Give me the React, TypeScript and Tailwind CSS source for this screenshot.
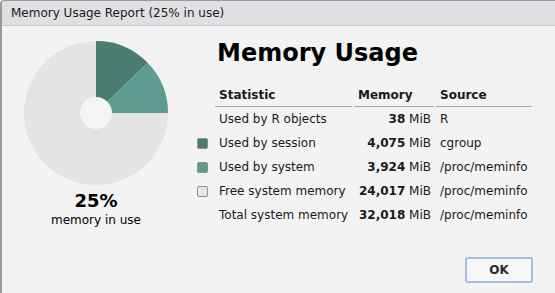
import React from "react";

const rows = [
  { swatch: null, label: "Used by R objects", mem: "38", src: "R" },
  { swatch: "bg-[#4c7b71]", label: "Used by session", mem: "4,075", src: "cgroup" },
  { swatch: "bg-[#5f9c90]", label: "Used by system", mem: "3,924", src: "/proc/meminfo" },
  { swatch: "bg-[#e6e6e6]", label: "Free system memory", mem: "24,017", src: "/proc/meminfo" },
  { swatch: null, label: "Total system memory", mem: "32,018", src: "/proc/meminfo" },
];

function Pie() {
  // angles clockwise from 12 o'clock
  const a = (4075 / 32018) * 360;
  const rad = (a * Math.PI) / 180;
  const x = 72 + 72 * Math.sin(rad);
  const y = 72 - 72 * Math.cos(rad);
  return (
    <svg width="144" height="144" viewBox="0 0 144 144">
      <path d="M72 72 L144 72 A72 72 0 1 1 72 0 Z" fill="#e4e4e4" />
      <path d={`M72 72 L72 0 A72 72 0 0 1 ${x} ${y} Z`} fill="#4c7b71" />
      <path d={`M72 72 L${x} ${y} A72 72 0 0 1 144 72 Z`} fill="#5f9c90" />
      <circle cx="72" cy="72" r="16" fill="#f4f5f4" />
    </svg>
  );
}

export default function App() {
  return (
    <div className="w-[555px] h-[293px] overflow-hidden bg-[#f2f3f2] border-l-2 border-t border-[#9a9a9a] rounded-tl-[4px] flex flex-col text-[#1a1a1a] font-['DejaVu_Sans',sans-serif]">
      {/* title bar */}
      <div className="h-[25px] shrink-0 bg-[#dfe0e3] border-b border-[#c9cacd] flex items-center pl-[9px] text-[12px]">
        Memory Usage Report (25% in use)
      </div>

      <div className="flex flex-1">
        {/* chart */}
        <div className="pl-[22px] pt-[15px] w-[166px] flex flex-col items-center">
          <Pie />
          <div className="mt-[5px] text-[18px] font-bold leading-[22px] text-black">25%</div>
          <div className="mt-[1px] text-[12px] leading-[14px] text-black">memory in use</div>
        </div>

        {/* report */}
        <div className="pl-[27px] pt-[12px]">
          <h1 className="pl-[22px] text-[24px] leading-[30px] font-bold text-black">Memory Usage</h1>
          <table className="mt-[15px] border-separate border-spacing-x-[2px] border-spacing-y-0 text-[12px]">
            <thead>
              <tr className="h-[24px]">
                <th className="w-[16px]"></th>
                <th className="w-[137px] text-left font-bold pl-[4px] border-b border-[#aaaaaa]">Statistic</th>
                <th className="w-[80px] text-left font-bold pl-[4px] border-b border-[#aaaaaa]">Memory</th>
                <th className="w-[96px] text-left font-bold pl-[4px] border-b border-[#aaaaaa]">Source</th>
              </tr>
            </thead>
            <tbody>
              {rows.map((r) => (
                <tr key={r.label} className="h-[24px]">
                  <td className="align-middle">
                    {r.swatch && (
                      <div className={`w-[11px] h-[11px] rounded-[2px] border border-[#8e8e8e] ${r.swatch}`} />
                    )}
                  </td>
                  <td className="pl-[4px] whitespace-nowrap">{r.label}</td>
                  <td className="pr-[3px] text-right whitespace-nowrap">
                    <span className="font-bold">{r.mem}</span> MiB
                  </td>
                  <td className="pl-[4px] whitespace-nowrap">{r.src}</td>
                </tr>
              ))}
            </tbody>
          </table>
        </div>
      </div>

      <div className="flex justify-end pr-[22px] pb-[10px]">
        <button className="w-[68px] h-[26px] rounded-[3px] border-2 border-[#a3bde3] bg-[#f7f7f7] text-[12px] font-bold text-[#2a2a2a]">
          OK
        </button>
      </div>
    </div>
  );
}
